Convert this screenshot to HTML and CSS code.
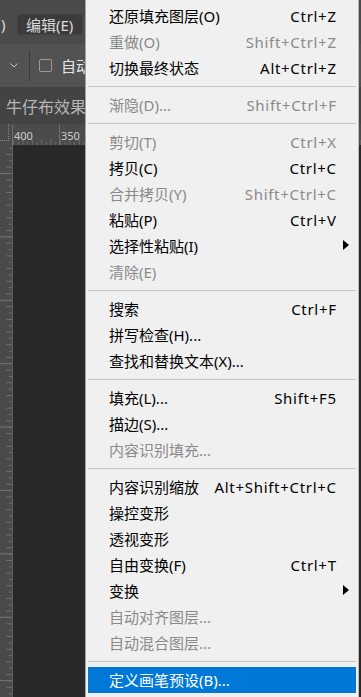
FILE: index.html
```html
<!DOCTYPE html>
<html lang="zh-CN">
<head>
  <meta charset="UTF-8" />
  <meta name="viewport" content="width=device-width, initial-scale=1.0"/>
  <title>编辑菜单</title>
  <link rel="stylesheet" href="styles.css">
</head>
<body>
  <div class="app">
    <div class="menubar">
      <span class="menubar-prev">)</span>
      <span class="menubar-item active">编辑(E)</span>
    </div>

    <div class="options">
      <svg class="chevron" width="8" height="5" viewBox="0 0 8 5"><path d="M0.5 0.5 L4 4 L7.5 0.5" fill="none" stroke="#c8c8c8" stroke-width="1"/></svg>
      <span class="divider"></span>
      <span class="checkbox"></span>
      <span class="option-label">自动选择</span>
    </div>

    <div class="tabs">
      <span class="tab">牛仔布效果</span>
    </div>

    <div class="ruler">
      <div class="ruler-corner"><span></span></div>
      <div class="ruler-scale">
        <span>400</span>
        <span>350</span>
      </div>
    </div>

    <div class="workspace">
      <div class="vruler"></div>
      <div class="canvas"></div>
    </div>
  </div>

  <div class="menu">
    <div class="item"><span>还原填充图层(O)</span><span class="key">Ctrl+Z</span></div>
    <div class="item disabled"><span>重做(O)</span><span class="key">Shift+Ctrl+Z</span></div>
    <div class="item"><span>切换最终状态</span><span class="key">Alt+Ctrl+Z</span></div>
    <div class="sep"></div>
    <div class="item disabled"><span>渐隐(D)...</span><span class="key">Shift+Ctrl+F</span></div>
    <div class="sep"></div>
    <div class="item disabled"><span>剪切(T)</span><span class="key">Ctrl+X</span></div>
    <div class="item"><span>拷贝(C)</span><span class="key">Ctrl+C</span></div>
    <div class="item disabled"><span>合并拷贝(Y)</span><span class="key">Shift+Ctrl+C</span></div>
    <div class="item"><span>粘贴(P)</span><span class="key">Ctrl+V</span></div>
    <div class="item submenu"><span>选择性粘贴(I)</span></div>
    <div class="item disabled"><span>清除(E)</span></div>
    <div class="sep"></div>
    <div class="item"><span>搜索</span><span class="key">Ctrl+F</span></div>
    <div class="item"><span>拼写检查(H)...</span></div>
    <div class="item"><span>查找和替换文本(X)...</span></div>
    <div class="sep"></div>
    <div class="item"><span>填充(L)...</span><span class="key">Shift+F5</span></div>
    <div class="item"><span>描边(S)...</span></div>
    <div class="item disabled"><span>内容识别填充...</span></div>
    <div class="sep"></div>
    <div class="item"><span>内容识别缩放</span><span class="key">Alt+Shift+Ctrl+C</span></div>
    <div class="item"><span>操控变形</span></div>
    <div class="item"><span>透视变形</span></div>
    <div class="item"><span>自由变换(F)</span><span class="key">Ctrl+T</span></div>
    <div class="item submenu"><span>变换</span></div>
    <div class="item disabled"><span>自动对齐图层...</span></div>
    <div class="item disabled"><span>自动混合图层...</span></div>
    <div class="sep"></div>
    <div class="item selected"><span>定义画笔预设(B)...</span></div>
  </div>
</body>
</html>
```

FILE: styles.css
```css
body {
  margin: 0;
  width: 361px;
  height: 697px;
  overflow: hidden;
  background: #282828;
  font-family: "Noto Sans", "Noto Sans CJK SC", sans-serif;
  position: relative;
}

.app { display: flex; flex-direction: column; height: 697px; }

/* dark photoshop chrome behind the menu */
.menubar { height: 44px; box-sizing: border-box; padding-top: 14px; background: #4a4a4a; display: flex; align-items: flex-start; color: #dcdcdc; font-size: 15px; }
.menubar-prev { width: 17px; padding-left: 1px; box-sizing: border-box; line-height: 21px; }
.menubar-item { width: 66px; height: 21px; box-sizing: border-box; padding-left: 8px; line-height: 20px; border-radius: 3px; }
.menubar-item.active { background: #3b3b3b; border: 1px solid #424242; }

.options { height: 43px; background: #525252; display: flex; align-items: center; }
.chevron { margin-left: 10px; }
.divider { width: 1px; height: 31px; background: #3a3a3a; margin-left: 11px; }
.checkbox { width: 11px; height: 11px; border: 1px solid #999; border-radius: 2px; margin-left: 9px; }
.option-label { margin-left: 9px; width: 24px; overflow: hidden; color: #e6e6e6; font-size: 15px; white-space: nowrap; }

.tabs { height: 37px; background: #434343; display: flex; align-items: center; }
.tab { margin-left: 6px; width: 79px; overflow: hidden; color: #b6b6b6; font-size: 16px; white-space: nowrap; }

.ruler { height: 21px; background: #4b4b4b; display: flex; }
.ruler-corner { width: 12px; border-right: 1px solid #707070; position: relative; }
.ruler-corner span { display: block; width: 8px; height: 16px; border-right: 1px dotted #8a8a8a; border-bottom: 1px dotted #8a8a8a; }
.ruler-scale {
  flex: 1;
  display: flex;
  background:
    linear-gradient(to right, #707070 0 1px, transparent 1px) 46px 0 / 47px 100% repeat-x,
    linear-gradient(to right, #6c6c6c 0 1px, transparent 1px) 0 100% / 9.4px 5px repeat-x,
    linear-gradient(to right, #6c6c6c 0 1px, transparent 1px) 4.7px 100% / 9.4px 3px repeat-x;
}
.ruler-scale span { width: 47px; flex: none; padding-left: 1px; box-sizing: border-box; color: #cdcdcd; font-size: 11px; line-height: 21px; margin-top: 1px; }

.workspace { flex: 1; display: flex; }
.vruler {
  width: 12px;
  border-right: 1px solid #5e5e5e;
  background-color: #4a4a4a;
  background-image:
    linear-gradient(to bottom, #747474 0 1px, transparent 1px),
    linear-gradient(to bottom, #6e6e6e 0 1px, transparent 1px),
    linear-gradient(to bottom, #6e6e6e 0 1px, transparent 1px);
  background-size: 12px 63.4px, 6px 12.7px, 3px 12.7px;
  background-position: 0 28px, 6px 34.3px, 9px 28px;
  background-repeat: repeat-y;
}
.canvas { flex: 1; background: #282828; }

/* the edit menu */
.menu {
  position: absolute;
  top: 0;
  left: 85px;
  width: 274px;
  box-sizing: border-box;
  padding: 3px 2px 4px 2px;
  background: #f0f0f0;
  border-left: 1px solid #a3a3a3;
  border-right: 1px solid #bdbdbd;
  font-size: 15px;
  color: #000;
}
.item { height: 26px; line-height: 26px; display: flex; justify-content: space-between; padding: 0 20px 0 21px; position: relative; white-space: nowrap; }
.item .key { letter-spacing: 0.7px; margin-right: -0.7px; }
.item.disabled { color: #8a8a8a; }
.item.selected { background: #0078d7; color: #fff; }
.item.submenu::after {
  content: "";
  position: absolute;
  right: 7px;
  top: 7px;
  border-left: 6px solid #000;
  border-top: 5.5px solid transparent;
  border-bottom: 5.5px solid transparent;
}
.sep { height: 1px; background: #c4c4c4; margin: 5px 0; }
```
